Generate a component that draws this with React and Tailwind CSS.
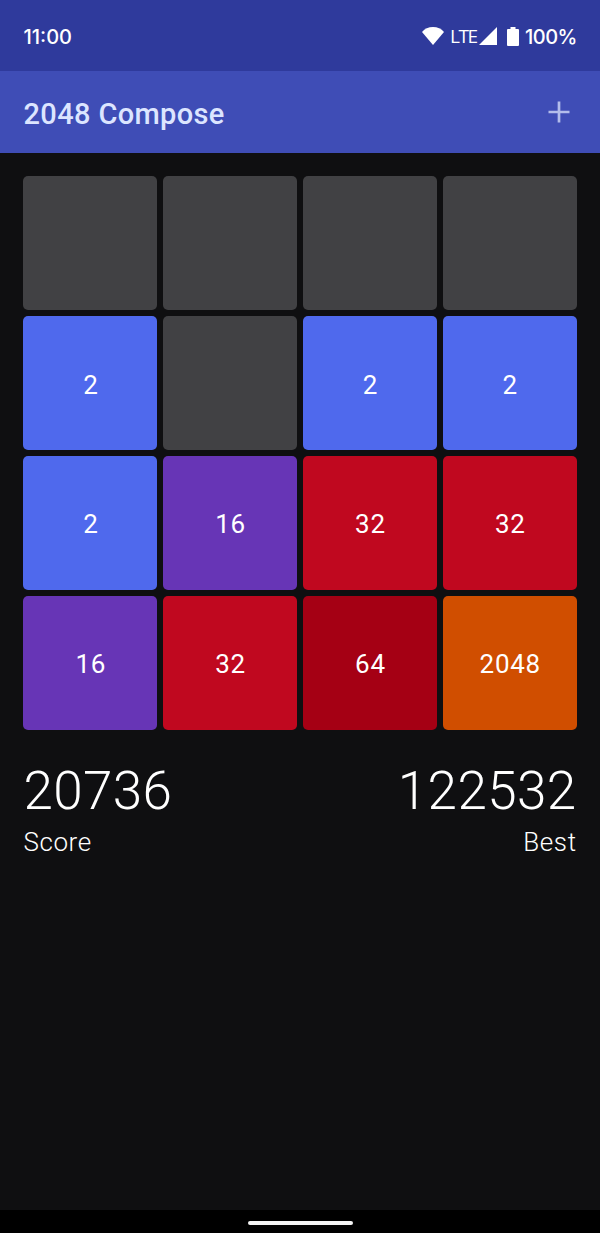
const EMPTY = "bg-[#414144]";
const BLUE = "bg-[#4f69ed]";
const PURPLE = "bg-[#6735b6]";
const RED = "bg-[#c0081f]";
const DARK_RED = "bg-[#a50014]";
const ORANGE = "bg-[#d04e00]";

const colors = { 0: EMPTY, 2: BLUE, 16: PURPLE, 32: RED, 64: DARK_RED, 2048: ORANGE };

const board = [0, 0, 0, 0, 2, 0, 2, 2, 2, 16, 32, 32, 16, 32, 64, 2048];

function StatusBar() {
  return (
    <div className="flex h-[71px] items-center justify-between bg-[#2f3a9c] pl-[23.500px] pr-[23px] text-white">
      <span className="pt-[3px] font-[Inter,sans-serif] text-[20px] font-medium leading-6">11:00</span>
      <div className="flex items-center pt-[1px]">
        <svg className="h-[18px] w-[22px]" viewBox="0 0 22 18" fill="currentColor">
          <path d="M0 5C2.8 1.8 6.5 0 11 0s8.200 1.800 11 5L11 18z" />
        </svg>
        <span className="ml-[6px] w-[26px] font-['Open_Sans',sans-serif] text-[19px] leading-6 tracking-[-1.500px]">LTE</span>
        <svg className="ml-[3px] h-[18px] w-[18px]" viewBox="0 0 18 18" fill="currentColor">
          <path d="M18 0v18H0z" />
        </svg>
        <svg className="ml-[10px] h-[19px] w-3" viewBox="0 0 12 19" fill="currentColor">
          <path d="M3.500 0h5v2H11a1 1 0 0 1 1 1v15a1 1 0 0 1-1 1H1a1 1 0 0 1-1-1V3a1 1 0 0 1 1-1h2.500z" />
        </svg>
        <span className="ml-[6px] w-[52px] pt-[2px] font-[Inter,sans-serif] text-[20px] font-medium leading-6 tracking-[-0.5px]">100%</span>
      </div>
    </div>
  );
}

function Score({ value, label, className }) {
  return (
    <div className={className}>
      <div className="text-[53px] font-light leading-[62px] tracking-[0.4px]">{value}</div>
      <div className="mt-[2px] text-[26px] font-light leading-[36px] tracking-[0.6px]">{label}</div>
    </div>
  );
}

export default function App() {
  return (
    <div className="flex h-[1233px] w-[600px] flex-col bg-[#0f0f11] font-[Roboto,sans-serif] text-white">
      <StatusBar />
      <header className="flex h-[82px] items-center justify-between bg-[#3f4db6] pl-[23.500px] pr-[30px] pt-[2px]">
        <h1 className="pt-[1px] text-[29px] font-medium leading-9 tracking-[0.35px] text-[#dce5ff]">2048 Compose</h1>
        <svg className="mb-[2px] h-[22px] w-[22px] text-[#b3bdeb]" viewBox="0 0 22 22" fill="none" stroke="currentColor" strokeWidth="2.700">
          <path d="M11 .5v21M.5 11h21" />
        </svg>
      </header>
      <main className="flex-1 px-[23.400px] pt-[23.400px]">
        <div className="grid grid-cols-4 gap-[6px]">
          {board.map((value, index) => (
            <div
              key={index}
              className={`flex h-[133.800px] items-center justify-center rounded-[5px] pl-[1px] pt-[4px] text-[26px] tracking-[0.7px] ${colors[value]}`}
            >
              {value || ""}
            </div>
          ))}
        </div>
        <div className="flex justify-between pt-[30px]">
          <Score value="20736" label="Score" />
          <Score value="122532" label="Best" className="text-right" />
        </div>
      </main>
      <nav className="flex h-[23px] items-center justify-center bg-black">
        <div className="mt-[2px] h-[4px] w-[105px] rounded-full bg-[#f4f4f4]" />
      </nav>
    </div>
  );
}
